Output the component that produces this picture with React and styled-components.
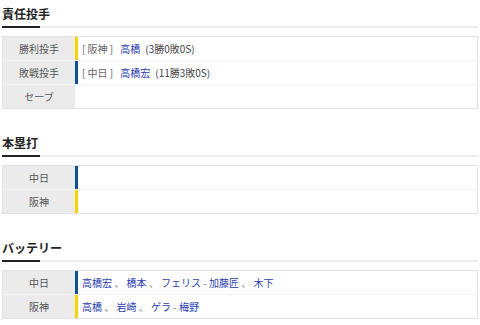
import React from 'react';
import styled, { createGlobalStyle } from 'styled-components';

const GlobalStyle = createGlobalStyle`
  body {
    margin: 0;
    background: #fff;
    font-family: "Noto Sans CJK JP", "Noto Sans", sans-serif;
  }
`;

const Page = styled.div`
  padding: 0 2px;
`;

const Section = styled.section`
  margin-bottom: 20px;
`;

const Heading = styled.h2`
  position: relative;
  margin: 0 0 8px;
  padding: 5px 0 3px;
  font-size: 12px;
  line-height: 18px;
  font-weight: bold;
  color: #222;
  border-bottom: 2px solid #eeeeee;

  &::after {
    content: '';
    position: absolute;
    left: 0;
    bottom: -2px;
    width: 38px;
    height: 2px;
    background: #222;
  }
`;

const Table = styled.div`
  border: 1px solid #e3e3e3;
`;

const Row = styled.div`
  display: grid;
  grid-template-columns: 72px 1fr;
  height: 23px;
  border-top: 1px solid #f3f3f3;

  &:first-child {
    border-top: none;
  }
`;

const Label = styled.div`
  display: flex;
  align-items: center;
  justify-content: center;
  background: #ebebeb;
  color: #555;
  font-size: 10px;
`;

const Value = styled.div`
  display: flex;
  align-items: center;
  padding-left: 4px;
  border-left: 3px solid ${(p) => p.$bar || 'transparent'};
  font-size: 10px;
  color: #444;
  white-space: pre;
`;

const Team = styled.span`
  color: #666;
  margin-right: 7px;
`;

const Name = styled.span`
  color: #2a3db0;
`;

const Stat = styled.span`
  color: #444;
  margin-left: 5px;
`;

const Sep = styled.span`
  color: #777;
`;

const TIGERS = '#f6d200';
const DRAGONS = '#134f97';

const Players = ({ list }) => (
  <>
    {list.map((item, i) =>
      item === '、' || item === '-' ? (
        <Sep key={i}>{item === '、' ? ' 、 ' : ' - '}</Sep>
      ) : (
        <Name key={i}>{item}</Name>
      )
    )}
  </>
);

const App = () => {
  return (
    <Page>
      <GlobalStyle />
      <Section>
        <Heading>責任投手</Heading>
        <Table>
          <Row>
            <Label>勝利投手</Label>
            <Value $bar={TIGERS}>
              <Team>[ 阪神 ]</Team>
              <Name>高橋</Name>
              <Stat>(3勝0敗0S)</Stat>
            </Value>
          </Row>
          <Row>
            <Label>敗戦投手</Label>
            <Value $bar={DRAGONS}>
              <Team>[ 中日 ]</Team>
              <Name>高橋宏</Name>
              <Stat>(11勝3敗0S)</Stat>
            </Value>
          </Row>
          <Row>
            <Label>セーブ</Label>
            <Value />
          </Row>
        </Table>
      </Section>

      <Section>
        <Heading>本塁打</Heading>
        <Table>
          <Row>
            <Label>中日</Label>
            <Value $bar={DRAGONS} />
          </Row>
          <Row>
            <Label>阪神</Label>
            <Value $bar={TIGERS} />
          </Row>
        </Table>
      </Section>

      <Section>
        <Heading>バッテリー</Heading>
        <Table>
          <Row>
            <Label>中日</Label>
            <Value $bar={DRAGONS}>
              <Players list={['高橋宏', '、', '橋本', '、', 'フェリス', '-', '加藤匠', '、', '木下']} />
            </Value>
          </Row>
          <Row>
            <Label>阪神</Label>
            <Value $bar={TIGERS}>
              <Players list={['高橋', '、', '岩崎', '、', 'ゲラ', '-', '梅野']} />
            </Value>
          </Row>
        </Table>
      </Section>
    </Page>
  );
};

export default App;
